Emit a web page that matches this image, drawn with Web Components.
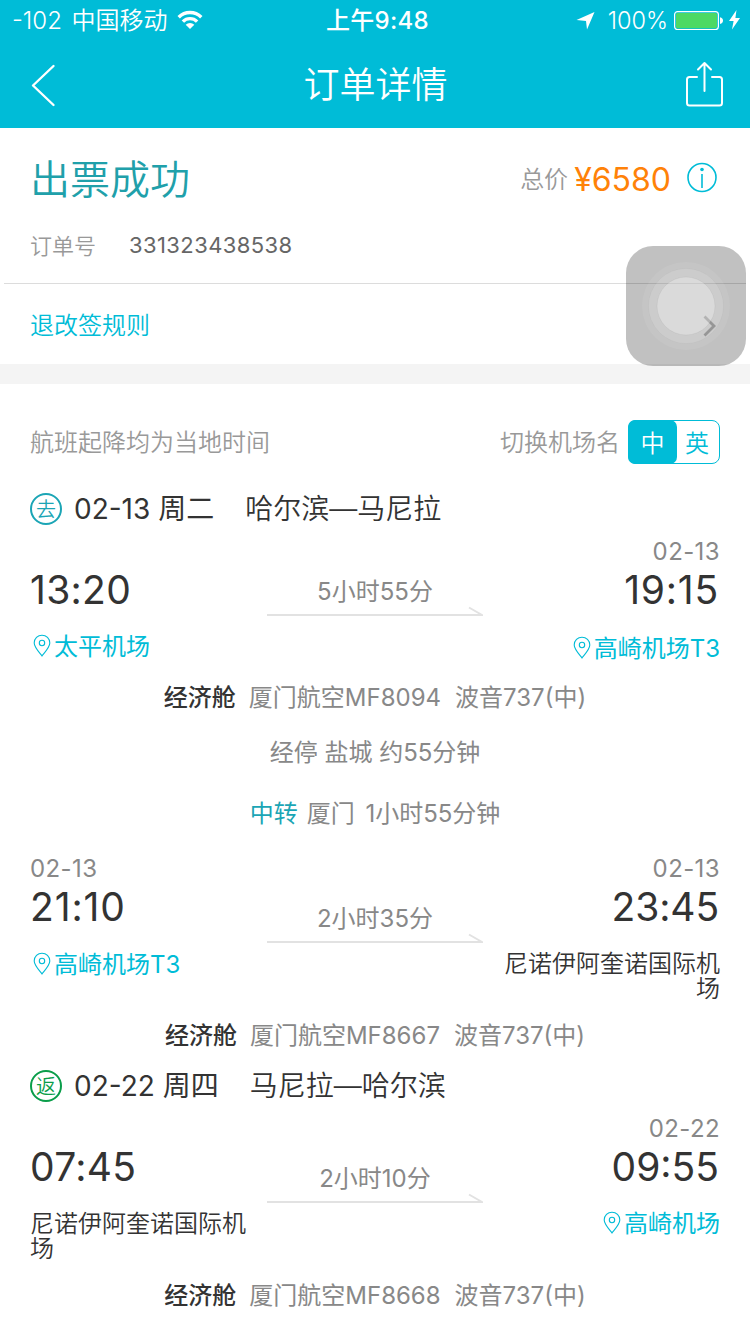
<!DOCTYPE html>
<html lang="zh-CN">
<head>
<meta charset="utf-8">
<title>订单详情</title>
<style>
  html, body {
    margin: 0;
    background: #fff;
  }

  body {
    position: relative;
    width: 750px;
    height: 1334px;
    overflow: hidden;
    font-family: Inter, "Noto Sans CJK SC", sans-serif;
    font-size: 24px;
    font-weight: 350;
    line-height: 30px;
    color: #333;
    --cyan: #00bcd7;
    --grey: #888;
  }
</style>
</head>
<body>

<status-bar></status-bar>
<nav-bar>订单详情</nav-bar>

<order-summary number="331323438538" price="¥6580">出票成功</order-summary>
<link-row>退改签规则</link-row>

<flight-list>
  <name-switch></name-switch>

  <day-title badge="去" date="02-13 周二" style="--badge: #1ba5b5">哈尔滨—马尼拉</day-title>
  <flight-leg duration="5小时55分" style="--pad: 23px; --line-top: 41px">
    <leg-stop time="13:20" place="太平机场" pin></leg-stop>
    <leg-stop slot="to" end date="02-13" time="19:15" place="高崎机场T3" pin style="--track: 0.8px; --place-top: 22px; --place-end: -2px"></leg-stop>
  </flight-leg>
  <cabin-info cabin="经济舱" flight="厦门航空MF8094" plane="波音737(中)"></cabin-info>

  <info-line style="margin-top: 25px">经停 盐城 约55分钟</info-line>
  <info-line label="中转" style="margin: 31px 0 25px; word-spacing: 4px">厦门 1小时55分钟</info-line>

  <flight-leg duration="2小时35分" style="--pad: 19px">
    <leg-stop date="02-13" time="21:10" place="高崎机场T3" pin style="--track: 0.9px; --place-top: 21px; --place-end: -1px"></leg-stop>
    <leg-stop slot="to" end date="02-13" time="23:45" place="尼诺伊阿奎诺国际机场" style="--track: -0.1px"></leg-stop>
  </flight-leg>
  <cabin-info cabin="经济舱" flight="厦门航空MF8667" plane="波音737(中)"></cabin-info>

  <day-title badge="返" date="02-22 周四" style="--badge: #0a9d4a; margin-top: 20px">马尼拉—哈尔滨</day-title>
  <flight-leg duration="2小时10分" style="--pad: 19px">
    <leg-stop time="07:45" place="尼诺伊阿奎诺国际机场"></leg-stop>
    <leg-stop slot="to" end date="02-22" time="09:55" place="高崎机场" pin style="--track: 0"></leg-stop>
  </flight-leg>
  <cabin-info cabin="经济舱" flight="厦门航空MF8668" plane="波音737(中)"></cabin-info>
</flight-list>

<assistive-touch></assistive-touch>

<script>
class StatusBar extends HTMLElement {
  constructor() {
    super();

    this.attachShadow({ mode: "open" }).innerHTML = `
      <style>
        :host {
          display: grid;
          grid-template-columns: 1fr auto 1fr;
          align-items: center;
          box-sizing: border-box;
          height: 40px;
          padding: 0 9px 0 12px;
          background: var(--cyan);
          color: #fff;
        }

        div {
          display: flex;
          align-items: center;
        }

        span, .time {
          padding-top: 2px;
        }

        svg {
          display: block;
        }

        .time {
          padding-left: 2px;
          font-weight: 500;
          letter-spacing: 0.3px;
        }

        .right {
          justify-content: flex-end;
        }
      </style>
      <div>
        <span style="word-spacing: 3px">-102 中国移动</span>
        <svg style="margin-left: 9px" width="26" height="20" viewBox="0 0 26 20" fill="none" stroke="#fff" stroke-width="3.4">
          <path d="M1.7 7.2a16 16 0 0 1 22.6 0"/>
          <path d="M5.9 11.6a10 10 0 0 1 14.2 0"/>
          <path d="M13 19l-4.3-4.3a6.1 6.1 0 0 1 8.6 0z" fill="#fff" stroke="none"/>
        </svg>
      </div>
      <div class="time">上午9:48</div>
      <div class="right">
        <svg width="20" height="20" viewBox="0 0 20 20" fill="#fff"><path d="M18.500 2L11 19.500 10 11 .5 10z"/></svg>
        <span style="margin: 0 6px 0 12px; font-size: 23.500px">100%</span>
        <svg width="50" height="20" viewBox="0 0 50 20">
          <rect x="0.6" y="1.6" width="43.8" height="18" rx="3" fill="none" stroke="#fff" stroke-width="1.2"/>
          <rect x="2" y="3" width="41" height="15.2" rx="1.6" fill="#4cd964"/>
          <path d="M46 7.2q3 .6 3 3.4t-3 3.4z" fill="#fff"/>
        </svg>
        <svg style="margin-left: 4px" width="13" height="20" viewBox="0 0 13 20" fill="#fff"><path d="M8.5 0L1 11h4.6L4 19.5 12 8H7.4z"/></svg>
      </div>
    `;
  }
}

class NavBar extends HTMLElement {
  constructor() {
    super();

    this.attachShadow({ mode: "open" }).innerHTML = `
      <style>
        :host {
          display: flex;
          justify-content: space-between;
          align-items: center;
          box-sizing: border-box;
          height: 88px;
          padding: 0 27px 0 30px;
          background: var(--cyan);
          color: #fff;
          font-size: 36px;
        }

        .title {
          padding: 2px 2px 0 0;
        }

        svg {
          width: 38px;
          height: 46px;
          fill: none;
          stroke: #fff;
          stroke-width: 2.4;
          stroke-linecap: round;
          stroke-linejoin: round;
        }
      </style>
      <svg viewBox="0 0 38 46"><path d="M23.5 5L3 24.5 23.5 44"/></svg>
      <span class="title"><slot></slot></span>
      <svg viewBox="0 0 38 46" style="stroke-width: 2">
        <path d="M12 16H4.500q-2.500 0-2.500 2.500V42q0 2.500 2.500 2.500h30q2.500 0 2.500-2.500V18.500q0-2.500-2.500-2.500H27"/>
        <path d="M19.500 30V2M13 8.500L19.500 2 26 8.500"/>
      </svg>
    `;
  }
}

class OrderSummary extends HTMLElement {
  constructor() {
    super();

    this.attachShadow({ mode: "open" }).innerHTML = `
      <style>
        :host {
          display: block;
          box-sizing: border-box;
          height: 156px;
          margin: 0 4px;
          padding: 20px 28px 0 26px;
          border-bottom: 1px solid #dcdcdc;
        }

        .row {
          display: flex;
          align-items: center;
          height: 60px;
        }

        .state {
          flex: 1;
          padding-top: 3px;
          font-size: 40px;
          color: #20a0aa;
        }

        .label {
          padding-top: 3px;
          color: #999;
        }

        .price {
          margin: 0 16px 0 6px;
          padding-top: 3px;
          font-size: 32px;
          font-weight: 400;
          color: #ff8208;
        }

        .info {
          margin-bottom: 2px;
        }

        .order {
          height: 74px;
          font-size: 22px;
          color: #666;
        }

        .order .label {
          margin-right: 33px;
          padding-top: 1px;
        }

        .number {
          font-weight: 400;
          letter-spacing: 0.4px;
        }
      </style>
      <div class="row">
        <span class="state"><slot></slot></span>
        <span class="label">总价</span>
        <span class="price">${this.getAttribute("price")}</span>
        <svg class="info" width="31" height="31" viewBox="0 0 31 31" fill="none" stroke="#00bcd7" stroke-width="1.6">
          <circle cx="15" cy="15.5" r="14"/>
          <path d="M15 12v14"/>
          <circle cx="15" cy="7.5" r="1.8" fill="#00bcd7" stroke="none"/>
        </svg>
      </div>
      <div class="row order">
        <span class="label">订单号</span>
        <span class="number">${this.getAttribute("number")}</span>
      </div>
    `;
  }
}

class LinkRow extends HTMLElement {
  constructor() {
    super();

    this.attachShadow({ mode: "open" }).innerHTML = `
      <style>
        :host {
          display: flex;
          justify-content: space-between;
          align-items: center;
          box-sizing: border-box;
          height: 100px;
          padding: 3px 34px 0 30px;
          border-bottom: 20px solid #f4f4f4;
          color: var(--cyan);
        }
      </style>
      <slot></slot>
      <svg width="13" height="22" viewBox="0 0 13 22" fill="none" stroke="#a8a8a8" stroke-width="2.8"><path d="M1.5 1.5l9.5 9.5-9.5 9.5"/></svg>
    `;
  }
}

class FlightList extends HTMLElement {
  constructor() {
    super();

    this.attachShadow({ mode: "open" }).innerHTML = `
      <style>
        :host {
          display: block;
          padding: 36px 30px 0;
        }
      </style>
      <slot></slot>
    `;
  }
}

// 中 / 英 toggle for the airport names
class NameSwitch extends HTMLElement {
  constructor() {
    super();

    this.attachShadow({ mode: "open" }).innerHTML = `
      <style>
        :host {
          display: flex;
          align-items: center;
          height: 44px;
          margin-bottom: 29px;
          line-height: 47px;
          color: #999;
        }

        .note {
          flex: 1;
        }

        .switch {
          display: flex;
          box-sizing: border-box;
          width: 92px;
          height: 44px;
          margin-left: 8px;
          border: 1px solid var(--cyan);
          border-radius: 8px;
          line-height: 45px;
          text-align: center;
          color: var(--cyan);
        }

        .on {
          width: 49px;
          margin: -1px 0 -1px -1px;
          border-radius: 7px;
          background: var(--cyan);
          line-height: 47px;
          color: #fff;
        }

        .off {
          flex: 1;
          padding-right: 2px;
        }
      </style>
      <span class="note">航班起降均为当地时间</span>
      <span>切换机场名</span>
      <div class="switch">
        <span class="on">中</span>
        <span class="off">英</span>
      </div>
    `;
  }
}

class DayTitle extends HTMLElement {
  constructor() {
    super();

    this.attachShadow({ mode: "open" }).innerHTML = `
      <style>
        :host {
          display: flex;
          align-items: center;
          height: 32px;
          margin-bottom: 11px;
          font-size: 28px;
          line-height: 34px;
        }

        .badge {
          box-sizing: border-box;
          width: 32px;
          height: 32px;
          margin-right: 12px;
          border: 2px solid var(--badge);
          border-radius: 50%;
          font-size: 20px;
          line-height: 31px;
          text-align: center;
          color: var(--badge);
        }

        .date {
          margin-right: 31px;
          font-weight: 400;
        }
      </style>
      <span class="badge">${this.getAttribute("badge")}</span>
      <span class="date">${this.getAttribute("date")}</span>
      <slot></slot>
    `;
  }
}

class FlightLeg extends HTMLElement {
  constructor() {
    super();

    this.attachShadow({ mode: "open" }).innerHTML = `
      <style>
        :host {
          display: grid;
          grid-template-columns: 237px 216px 237px;
          padding-bottom: var(--pad);
        }

        .middle {
          padding-top: var(--line-top, 51px);
          text-align: center;
          font-weight: 400;
          color: var(--grey);
        }

        svg {
          display: block;
          margin-top: -2px;
        }
      </style>
      <slot></slot>
      <div class="middle">
        ${this.getAttribute("duration")}
        <svg width="216" height="12" viewBox="0 0 216 12" fill="none" stroke="#e2e2e2" stroke-width="2"><path d="M0 10H215L202 2.5"/></svg>
      </div>
      <slot name="to"></slot>
    `;
  }
}

class LegStop extends HTMLElement {
  constructor() {
    super();

    const pin = `<svg width="18" height="24" viewBox="0 0 18 24" fill="none" stroke="#00bcd7" stroke-width="1.1">
      <path d="M9 22C5.5 17.5 1.2 13 1.2 9a7.8 7.8 0 0 1 15.6 0C16.8 13 12.5 17.5 9 22z"/>
      <circle cx="9" cy="9" r="2.7"/>
    </svg>`;

    this.attachShadow({ mode: "open" }).innerHTML = `
      <style>
        :host {
          display: block;
        }

        :host([end]) {
          text-align: right;
        }

        .date {
          height: 30px;
          line-height: 31px;
          font-weight: 400;
          letter-spacing: 0.4px;
          color: var(--grey);
        }

        .time {
          height: 48px;
          padding-right: 1px;
          font-size: 39px;
          font-weight: 400;
          line-height: 48px;
          letter-spacing: var(--track, 0.3px);
        }

        .place {
          display: flex;
          margin-top: var(--place-top, 20px);
          margin-bottom: var(--place-end, 0);
          line-height: 25px;
        }

        :host([end]) .place {
          justify-content: flex-end;
        }

        :host([pin]) .place {
          font-weight: 400;
          color: var(--cyan);
        }

        svg {
          flex: none;
          margin: 0 3px;
        }
      </style>
      <div class="date">${this.getAttribute("date") || ""}</div>
      <div class="time">${this.getAttribute("time")}</div>
      <div class="place">${this.hasAttribute("pin") ? pin : ""}<span>${this.getAttribute("place")}</span></div>
    `;
  }
}

class CabinInfo extends HTMLElement {
  constructor() {
    super();

    this.attachShadow({ mode: "open" }).innerHTML = `
      <style>
        :host {
          display: flex;
          justify-content: center;
          gap: 14px;
          height: 30px;
          line-height: 31px;
          font-weight: 400;
          color: var(--grey);
        }

        b {
          margin-right: -1px;
          font-weight: 500;
          color: #333;
        }
      </style>
      <b>${this.getAttribute("cabin")}</b>
      <span>${this.getAttribute("flight")}</span>
      <span>${this.getAttribute("plane")}</span>
    `;
  }
}

class InfoLine extends HTMLElement {
  constructor() {
    super();

    this.attachShadow({ mode: "open" }).innerHTML = `
      <style>
        :host {
          display: flex;
          justify-content: center;
          gap: 9px;
          height: 30px;
          line-height: 31px;
          font-weight: 400;
          color: var(--grey);
        }

        .label {
          color: #1ba5b5;
        }
      </style>
      ${this.hasAttribute("label") ? `<span class="label">${this.getAttribute("label")}</span>` : ""}
      <span><slot></slot></span>
    `;
  }
}

// floating system button, lies over the page
class AssistiveTouch extends HTMLElement {
  constructor() {
    super();

    this.attachShadow({ mode: "open" }).innerHTML = `
      <style>
        :host {
          position: absolute;
          left: 626px;
          top: 246px;
          width: 120px;
          height: 120px;
          border-radius: 27px;
          background: rgba(0, 0, 0, 0.243);
        }

        svg {
          display: block;
        }
      </style>
      <svg width="120" height="120" viewBox="0 0 120 120" fill="#fff">
        <circle cx="60" cy="60" r="44" fill-opacity="0.07"/>
        <circle cx="60" cy="60" r="37.5" fill-opacity="0.12" stroke="#000" stroke-opacity="0.02"/>
        <circle cx="60" cy="60" r="29" fill-opacity="0.28" stroke="#000" stroke-opacity="0.04"/>
      </svg>
    `;
  }
}

customElements.define("status-bar", StatusBar);
customElements.define("nav-bar", NavBar);
customElements.define("order-summary", OrderSummary);
customElements.define("link-row", LinkRow);
customElements.define("flight-list", FlightList);
customElements.define("name-switch", NameSwitch);
customElements.define("day-title", DayTitle);
customElements.define("flight-leg", FlightLeg);
customElements.define("leg-stop", LegStop);
customElements.define("cabin-info", CabinInfo);
customElements.define("info-line", InfoLine);
customElements.define("assistive-touch", AssistiveTouch);
</script>
</body>
</html>
